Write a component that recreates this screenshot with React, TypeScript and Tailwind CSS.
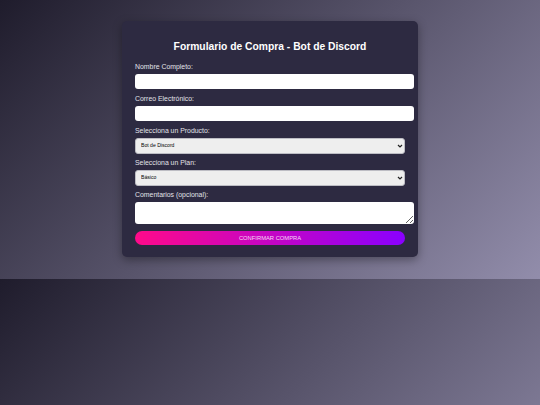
import React from "react";

const Chevron = () => (
  <svg
    className="pointer-events-none absolute right-[2px] top-1/2 -translate-y-1/2"
    width="6"
    height="5"
    viewBox="0 0 6 5"
    fill="none"
  >
    <polyline points="1,1.5 3,3.5 5,1.5" stroke="#222" strokeWidth="1.2" />
  </svg>
);

const Label = ({ children }: { children: React.ReactNode }) => (
  <label className="mb-[3px] block text-[6.9px] leading-[9px] text-[#e2e2e8]">{children}</label>
);

const App = () => {
  return (
    <div className="min-h-screen bg-[linear-gradient(135deg,#1f1c2c,#928dab)] bg-[length:100%_279px] bg-repeat pt-[21px] font-['Liberation_Sans',Arial,sans-serif]">
      <div className="mx-auto w-[296px] rounded-[5px] bg-[#2d2a41] px-[13px] pt-[19px] pb-[12px] shadow-[0_3px_10px_rgba(0,0,0,0.35)]">
        <h2 className="text-center text-[10.3px] font-bold leading-[14px] text-white">
          Formulario de Compra - Bot de Discord
        </h2>
        <form className="mt-[8px] flex flex-col" onSubmit={(e) => e.preventDefault()}>
          <Label>Nombre Completo:</Label>
          <input type="text" className="mb-[5px] block h-[15px] w-[279px] rounded-[3px] border-0 bg-white outline-none" />

          <Label>Correo Electrónico:</Label>
          <input type="email" className="mb-[5px] block h-[15px] w-[279px] rounded-[3px] border-0 bg-white outline-none" />

          <Label>Selecciona un Producto:</Label>
          <div className="relative mb-[4px] w-[270px]">
            <select className="block h-[16px] w-full appearance-none rounded-[3px] border border-[#bdbdc4] bg-[#eeeeee] pl-[5px] text-[5.1px] text-black outline-none">
              <option>Bot de Discord</option>
            </select>
            <Chevron />
          </div>

          <Label>Selecciona un Plan:</Label>
          <div className="relative mb-[4px] w-[270px]">
            <select className="block h-[16px] w-full appearance-none rounded-[3px] border border-[#bdbdc4] bg-[#eeeeee] pl-[5px] text-[5.1px] text-black outline-none">
              <option>Básico</option>
            </select>
            <Chevron />
          </div>

          <Label>Comentarios (opcional):</Label>
          <textarea className="block h-[22px] w-[279px] resize rounded-[3px] border-0 bg-white outline-none" />

          <button
            type="submit"
            className="mt-[7px] h-[14px] w-[270px] rounded-full bg-[linear-gradient(90deg,#ff0a8a,#8a00ff)] text-[5.8px] uppercase leading-[14px] text-[#f6d6f6]"
          >
            Confirmar Compra
          </button>
        </form>
      </div>
    </div>
  );
};

export default App;
